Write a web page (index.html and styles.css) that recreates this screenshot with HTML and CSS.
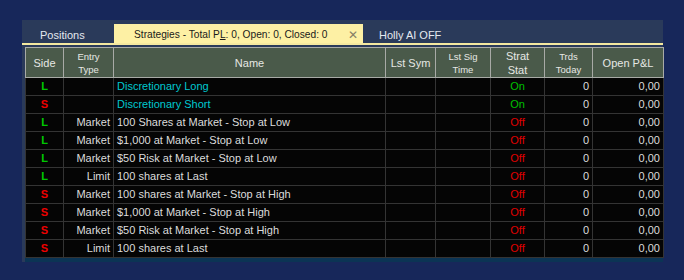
FILE: index.html
```html
<!DOCTYPE html>
<html>
<head>
<meta charset="utf-8">
<link rel="stylesheet" href="styles.css">
</head>
<body>
<div class="panel">
  <div class="tabs">
    <div class="tab">Positions</div>
    <div class="tab active"><span class="title">Strategies - Total P<u>L</u>: 0, Open: 0, Closed: 0</span><span class="close">✕</span></div>
    <div class="tab holly">Holly AI OFF</div>
  </div>
  <div class="rule"></div>
  <div class="gridwrap">
    <table class="grid">
      <colgroup>
        <col class="c-side"><col class="c-entry"><col class="c-name"><col class="c-sym"><col class="c-sig"><col class="c-stat"><col class="c-trds"><col class="c-pnl">
      </colgroup>
      <thead>
        <tr>
          <th>Side</th><th class="small">Entry<br>Type</th><th>Name</th><th>Lst Sym</th><th class="small">Lst Sig<br>Time</th><th class="two">Strat<br>Stat</th><th class="small">Trds<br>Today</th><th>Open P&amp;L</th>
        </tr>
      </thead>
      <tbody>
        <tr><td class="side long">L</td><td class="r"></td><td class="cyan">Discretionary Long</td><td></td><td></td><td class="on">On</td><td class="r">0</td><td class="r">0,00</td></tr>
        <tr><td class="side short">S</td><td class="r"></td><td class="cyan">Discretionary Short</td><td></td><td></td><td class="on">On</td><td class="r">0</td><td class="r">0,00</td></tr>
        <tr><td class="side long">L</td><td class="r">Market</td><td>100 Shares at Market - Stop at Low</td><td></td><td></td><td class="off">Off</td><td class="r">0</td><td class="r">0,00</td></tr>
        <tr><td class="side long">L</td><td class="r">Market</td><td>$1,000 at Market - Stop at Low</td><td></td><td></td><td class="off">Off</td><td class="r">0</td><td class="r">0,00</td></tr>
        <tr><td class="side long">L</td><td class="r">Market</td><td>$50 Risk at Market - Stop at Low</td><td></td><td></td><td class="off">Off</td><td class="r">0</td><td class="r">0,00</td></tr>
        <tr><td class="side long">L</td><td class="r">Limit</td><td>100 shares at Last</td><td></td><td></td><td class="off">Off</td><td class="r">0</td><td class="r">0,00</td></tr>
        <tr><td class="side short">S</td><td class="r">Market</td><td>100 shares at Market - Stop at High</td><td></td><td></td><td class="off">Off</td><td class="r">0</td><td class="r">0,00</td></tr>
        <tr><td class="side short">S</td><td class="r">Market</td><td>$1,000 at Market - Stop at High</td><td></td><td></td><td class="off">Off</td><td class="r">0</td><td class="r">0,00</td></tr>
        <tr><td class="side short">S</td><td class="r">Market</td><td>$50 Risk at Market - Stop at High</td><td></td><td></td><td class="off">Off</td><td class="r">0</td><td class="r">0,00</td></tr>
        <tr><td class="side short">S</td><td class="r">Limit</td><td>100 shares at Last</td><td></td><td></td><td class="off">Off</td><td class="r">0</td><td class="r">0,00</td></tr>
      </tbody>
    </table>
    <div class="foot"></div>
  </div>
</div>
</body>
</html>
```

FILE: styles.css
```css
html, body {
  margin: 0;
  padding: 0;
  background: #17275a;
  font-family: "Liberation Sans", Arial, sans-serif;
}
body {
  padding: 20px 0 0 22px;
  height: 280px;
  box-sizing: border-box;
}
.panel {
  width: 641px;
  background: #2a3a5a;
}
.tabs {
  height: 23px;
  display: flex;
  align-items: flex-end;
}
.tab {
  height: 19px;
  font-size: 11px;
  line-height: 22px;
  color: #e4e8f0;
  white-space: nowrap;
}
.tab:first-child {
  width: 92px;
  padding-left: 18px;
  box-sizing: border-box;
}
.tab.active {
  width: 249px;
  background: #fdf0a4;
  color: #1a1a1a;
  display: flex;
  padding-left: 20px;
  box-sizing: border-box;
  font-size: 10.2px;
}
.tab.active .title {
  width: 214px;
}
.tab.active u {
  text-decoration: underline;
  text-underline-offset: 1px;
}
.close {
  color: #857f66;
  font-size: 12px;
}
.tab.holly {
  padding-left: 16px;
}
.rule {
  height: 2px;
  background: #f4e8a0;
}
.gridwrap {
  padding: 2px 0 4px 3px;
  position: relative;
}
.grid {
  border-collapse: collapse;
  table-layout: fixed;
  width: 638px;
  background: #050505;
  font-size: 11px;
}
.c-side { width: 38px; }
.c-entry { width: 50px; }
.c-name { width: 272px; }
.c-sym { width: 50px; }
.c-sig { width: 55px; }
.c-stat { width: 54px; }
.c-trds { width: 48px; }
.c-pnl { width: 71px; }
.grid th {
  height: 29px;
  padding: 0;
  background: #4a5a4a;
  color: #e6e8e4;
  font-weight: normal;
  font-size: 11px;
  line-height: 14px;
  border: 1px solid #a8aaa6;
  text-align: center;
}
.grid th.small {
  font-size: 9.5px;
  line-height: 13px;
}
.grid th.two {
  line-height: 14px;
}
.grid td {
  height: 17px;
  padding: 0 3px;
  border: 1px solid #343434;
  color: #dcdcdc;
  line-height: 17px;
  white-space: nowrap;
  overflow: hidden;
}
.grid td.r { text-align: right; }
.grid td.side {
  text-align: center;
  font-weight: bold;
}
.long { color: #00c800 !important; }
.short { color: #ee0000 !important; }
.cyan { color: #00c8d0 !important; }
.on { color: #00c000 !important; text-align: center; }
.off { color: #e00000 !important; text-align: center; }
.foot {
  height: 4px;
  width: 638px;
  background: #0b3454;
  position: absolute;
  left: 3px;
  bottom: 0;
}
```
